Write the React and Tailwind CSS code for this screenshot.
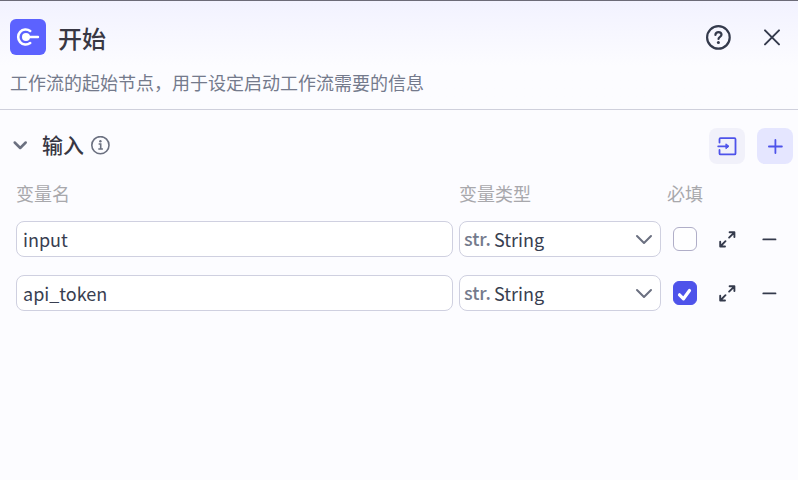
import React, { useState } from "react";

const ROW_GRID =
  "grid grid-cols-[minmax(0,1fr)_202px_36px_36px_36px] items-center gap-x-1.5";

const TYPES = ["String", "Integer", "Boolean", "Number", "Object"];

function StartLogo() {
  return (
    <div className="flex size-9 shrink-0 items-center justify-center rounded-md bg-[#5c62ff]">
      <svg width="36" height="36" viewBox="0 0 36 36" fill="none" aria-hidden="true">
        <path
          d="M20.2 12A7.5 7.5 0 1 0 20.2 24"
          stroke="#fff"
          strokeWidth="2.6"
          strokeLinecap="round"
        />
        <circle cx="16" cy="18" r="4" fill="#fff" />
        <path d="M16 18h12" stroke="#fff" strokeWidth="2.4" strokeLinecap="round" />
      </svg>
    </div>
  );
}

function HelpIcon() {
  return (
    <svg width="26" height="26" viewBox="0 0 26 26" fill="none" stroke="#343a4c" strokeWidth="2.2" strokeLinecap="round" aria-hidden="true">
      <circle cx="13.4" cy="13.4" r="11.3" />
      <path d="M10.4 11c0-1.8 1.3-2.9 3.1-2.9s3 1.1 3 2.7c0 2.2-3 2-3 4.2" />
      <circle cx="13.4" cy="18.4" r="1.5" fill="#343a4c" stroke="none" />
    </svg>
  );
}

function InfoIcon() {
  return (
    <svg width="20" height="20" viewBox="0 0 20 20" fill="none" stroke="#6b7080" strokeWidth="1.6" aria-hidden="true">
      <circle cx="10.4" cy="9.2" r="8.6" />
      <path d="M8.6 8h2.1v4.9M8.3 13h4.6" />
      <circle cx="10.4" cy="5.3" r="1.2" fill="#6b7080" stroke="none" />
    </svg>
  );
}

function ImportIcon() {
  return (
    <svg width="20" height="20" viewBox="0 0 20 20" fill="none" stroke="#4e53ea" strokeWidth="1.8" strokeLinecap="round" strokeLinejoin="round" aria-hidden="true">
      <path d="M2.5 6.5V3.2q0-1 1-1h14q1 0 1 1v14.2q0 1-1 1h-14q-1 0-1-1V14" />
      <path d="M1.2 10.3h9" />
      <path d="M9.2 8.1 12 10.3 9.2 12.5z" fill="#4e53ea" strokeWidth="1" />
    </svg>
  );
}

function ExpandIcon() {
  return (
    <svg width="18" height="18" viewBox="0 0 18 18" fill="none" stroke="#343a4c" strokeWidth="1.9" strokeLinecap="round" strokeLinejoin="round" aria-hidden="true">
      <path d="M11.6 2.3H16.4v4.8M15.9 2.8l-4.8 4.8" />
      <path d="M2.2 11.7V16.500h4.8M2.7 16l4.8-4.8" />
    </svg>
  );
}

function VariableRow({ row, onChange, onRemove }) {
  return (
    <div className={ROW_GRID}>
      <input
        type="text"
        aria-label="变量名"
        value={row.name}
        onChange={(e) => onChange({ ...row, name: e.target.value })}
        className="h-9 w-full rounded-lg border border-[#cfd0e0] bg-white px-1.5 text-lg leading-8 text-[#383e50] outline-none focus:border-[#4e53ea]"
      />

      <div className="relative">
        <span className="pointer-events-none absolute inset-y-0 left-[5px] flex items-center pb-0.5 text-lg font-medium text-[#747a8c]">
          str.
        </span>
        <select
          aria-label="变量类型"
          value={row.type}
          onChange={(e) => onChange({ ...row, type: e.target.value })}
          className="h-9 w-full appearance-none rounded-lg border border-[#cfd0e0] bg-white pr-9 pl-[34px] text-lg leading-8 text-[#383e50] outline-none focus:border-[#4e53ea]"
        >
          {TYPES.map((type) => (
            <option key={type}>{type}</option>
          ))}
        </select>
        <svg className="pointer-events-none absolute inset-y-0 right-2 my-auto" width="18" height="18" viewBox="0 0 18 18" fill="none" stroke="#6b7080" strokeWidth="2" strokeLinecap="round" strokeLinejoin="round" aria-hidden="true">
          <path d="M2 6l7 7 7-7" />
        </svg>
      </div>

      <div className="relative size-6 justify-self-center">
        <input
          type="checkbox"
          aria-label="必填"
          checked={row.required}
          onChange={(e) => onChange({ ...row, required: e.target.checked })}
          className="block size-6 appearance-none rounded-md border border-[#b0aec8] bg-white/50 checked:border-[#4e53ea] checked:bg-[#4e53ea]"
        />
        {row.required && (
          <svg className="pointer-events-none absolute inset-0" width="24" height="24" viewBox="0 0 24 24" fill="none" stroke="#fff" strokeWidth="3.2" strokeLinecap="round" strokeLinejoin="round" aria-hidden="true">
            <path d="M6.5 13.800l4 4 6-8.300" />
          </svg>
        )}
      </div>

      <button type="button" title="展开" className="flex size-9 items-center justify-center rounded-lg hover:bg-[#efeff8]">
        <ExpandIcon />
      </button>
      <button
        type="button"
        title="删除"
        onClick={onRemove}
        className="flex size-9 items-center justify-center rounded-lg hover:bg-[#efeff8]"
      >
        <svg width="16" height="16" viewBox="0 0 16 16" stroke="#343a4c" strokeWidth="1.8" strokeLinecap="round" aria-hidden="true">
          <path d="M2.3 8.4h12.2" />
        </svg>
      </button>
    </div>
  );
}

export default function App() {
  const [open, setOpen] = useState(true);
  const [rows, setRows] = useState([
    { id: 1, name: "input", type: "String", required: false },
    { id: 2, name: "api_token", type: "String", required: true },
  ]);

  const updateRow = (next) =>
    setRows(rows.map((row) => (row.id === next.id ? next : row)));
  const removeRow = (id) => setRows(rows.filter((row) => row.id !== id));
  const addRow = () =>
    setRows([...rows, { id: Date.now(), name: "", type: "String", required: false }]);

  return (
    <main className="min-h-screen border-t border-[#6c6b78] bg-[#fcfcff] font-['Noto_Sans_CJK_SC',sans-serif] text-[#383743]">
      <header className="border-b border-[#cfd0dc] bg-linear-to-b from-[#f2f2ff] to-[#fcfcff] to-60% px-2.5 pt-[18px] pb-3.5">
        <div className="flex h-9 items-center">
          <StartLogo />
          <h1 className="ml-3 flex-1 pt-0.5 text-2xl leading-9 font-medium">开始</h1>
          <button type="button" title="帮助" className="flex size-9 items-center justify-center">
            <HelpIcon />
          </button>
          <button type="button" title="关闭" className="ml-[18px] -mr-0.5 flex size-9 items-center justify-center">
            <svg width="18" height="18" viewBox="0 0 18 18" stroke="#343a4c" strokeWidth="2" strokeLinecap="round" aria-hidden="true">
              <path d="M2 2.4l14 14M16 2.4L2 16.4" />
            </svg>
          </button>
        </div>
        <p className="mt-3.5 text-lg leading-[26px] text-[#747a8c]">
          工作流的起始节点，用于设定启动工作流需要的信息
        </p>
      </header>

      <section className="pt-[18px]">
        <div className="flex h-9 items-center pr-[5px] pl-3">
          <button
            type="button"
            aria-expanded={open}
            onClick={() => setOpen(!open)}
            className="flex h-9 items-center pb-1"
          >
            <svg className={open ? "" : "-rotate-90"} width="16" height="16" viewBox="0 0 16 16" fill="none" stroke="#6b7080" strokeWidth="2.5" strokeLinecap="round" strokeLinejoin="round" aria-hidden="true">
              <path d="M2.7 6.500l5.500 5.500L13.700 6.500" />
            </svg>
            <span className="ml-3.5 text-[21px] leading-8 font-medium">输入</span>
          </button>
          <span className="ml-1.5 flex-1">
            <InfoIcon />
          </span>
          <button type="button" title="导入" className="flex size-9 items-center justify-center rounded-lg bg-[#f1f1fa]">
            <ImportIcon />
          </button>
          <button
            type="button"
            title="添加"
            onClick={addRow}
            className="ml-3 flex size-9 items-center justify-center rounded-lg bg-[#e5e6ff]"
          >
            <svg width="16" height="16" viewBox="0 0 16 16" stroke="#4e53ea" strokeWidth="1.8" strokeLinecap="round" aria-hidden="true">
              <path d="M8.4 2v13M1.9 8.500h13" />
            </svg>
          </button>
        </div>

        {open && (
          <div className="mt-4 pr-[11px] pl-4">
            <div className={`${ROW_GRID} text-lg leading-[26px] text-[#a8a8ac]`}>
              <span>变量名</span>
              <span>变量类型</span>
              <span>必填</span>
            </div>
            <div className="mt-[15px] flex flex-col gap-[18px]">
              {rows.map((row) => (
                <VariableRow
                  key={row.id}
                  row={row}
                  onChange={updateRow}
                  onRemove={() => removeRow(row.id)}
                />
              ))}
            </div>
          </div>
        )}
      </section>
    </main>
  );
}
